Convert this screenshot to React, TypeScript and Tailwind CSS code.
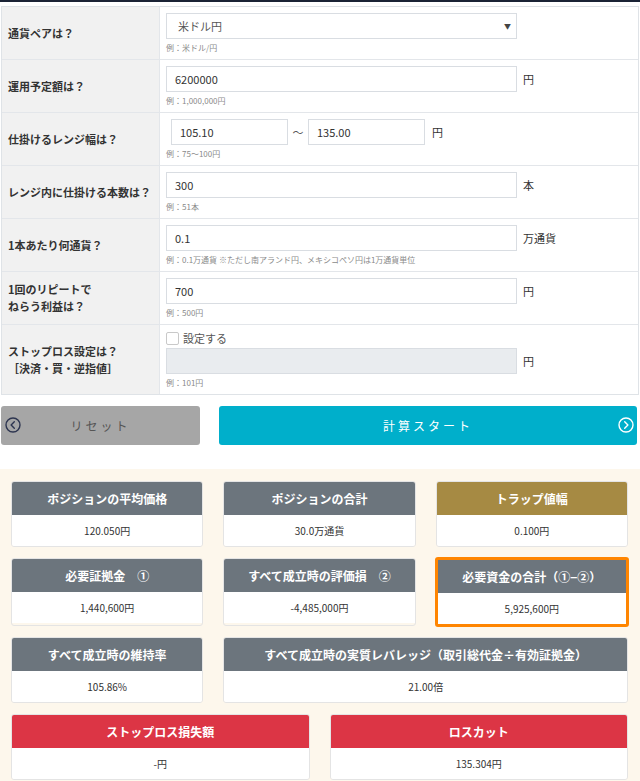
import React from 'react'

const font = { fontFamily: '"Noto Sans CJK JP", "Noto Sans", sans-serif' }

type Card = { title: string; value: string; tone: 'gray' | 'gold' | 'red'; span?: boolean; highlight?: boolean }

const cardRows: Card[] = [
  { title: 'ポジションの平均価格', value: '120.050円', tone: 'gray' },
  { title: 'ポジションの合計', value: '30.0万通貨', tone: 'gray' },
  { title: 'トラップ値幅', value: '0.100円', tone: 'gold' },
  { title: '必要証拠金　①', value: '1,440,600円', tone: 'gray' },
  { title: 'すべて成立時の評価損　②', value: '-4,485,000円', tone: 'gray' },
  { title: '必要資金の合計（①−②）', value: '5,925,600円', tone: 'gray', highlight: true },
  { title: 'すべて成立時の維持率', value: '105.86%', tone: 'gray' },
  { title: 'すべて成立時の実質レバレッジ（取引総代金÷有効証拠金）', value: '21.00倍', tone: 'gray', span: true },
]

const lossCards: Card[] = [
  { title: 'ストップロス損失額', value: '-円', tone: 'red' },
  { title: 'ロスカット', value: '135.304円', tone: 'red' },
]

function Row({ label, children }: { label: React.ReactNode; children: React.ReactNode }) {
  return (
    <div className="flex border-b border-[#e3e6ea] last:border-b-0">
      <div className="flex w-[158px] shrink-0 items-center border-r border-[#e3e6ea] bg-[#f1f1f1] px-[6px] text-[11px] font-bold leading-[17px] text-[#333]">
        {label}
      </div>
      <div className="flex-1 px-[6px] pb-[6px] pt-[6px]">{children}</div>
    </div>
  )
}

function Example({ children }: { children: React.ReactNode }) {
  return <div className="mt-[3px] text-[8px] leading-[11px] text-[#8a8a8a]">{children}</div>
}

function TextInput({ value, width = 'w-[351px]', disabled }: { value?: string; width?: string; disabled?: boolean }) {
  return (
    <div
      className={`flex h-[26px] ${width} items-center border border-[#d9dde2] px-[8px] text-[11px] text-[#333] ${
        disabled ? 'bg-[#e9ecef]' : 'bg-white'
      }`}
    >
      {value}
    </div>
  )
}

function ResultCard({ card }: { card: Card }) {
  const head = card.tone === 'gold' ? 'bg-[#a68a43]' : card.tone === 'red' ? 'bg-[#dc3545]' : 'bg-[#6c757d]'
  return (
    <div
      className={`overflow-hidden rounded-[3px] ${card.span ? 'col-span-2' : ''} ${
        card.highlight ? '-m-px border-[3px] border-[#ff8500]' : 'border border-[#e4e4e4]'
      }`}
    >
      <div className={`flex h-[33px] items-center justify-center text-[12px] font-bold text-white ${head}`}>
        {card.title}
      </div>
      <div className="flex h-[31px] items-center justify-center bg-white text-[10px] text-[#333]">{card.value}</div>
    </div>
  )
}

export default function App() {
  return (
    <div className="min-h-[781px] bg-white" style={font}>
      <div className="h-[2px] bg-[#1b2335]" />
      <div className="px-px pt-[4px]">
        <div className="w-[638px] border border-[#dfe3e7]">
          <Row label="通貨ペアは？">
            <div className="flex h-[26px] w-[351px] items-center justify-between border border-[#d9dde2] bg-white pl-[11px] pr-[5px] text-[11px] text-[#555]">
              <span>米ドル円</span>
              <span className="text-[7px] text-[#444]">▼</span>
            </div>
            <Example>例：米ドル/円</Example>
          </Row>
          <Row label="運用予定額は？">
            <div className="flex items-center gap-[6px]">
              <TextInput value="6200000" />
              <span className="text-[11px] text-[#333]">円</span>
            </div>
            <Example>例：1,000,000円</Example>
          </Row>
          <Row label="仕掛けるレンジ幅は？">
            <div className="flex items-center pl-[5px]">
              <TextInput value="105.10" width="w-[117px]" />
              <span className="w-[20px] text-center text-[11px] text-[#555]">～</span>
              <TextInput value="135.00" width="w-[117px]" />
              <span className="ml-[7px] text-[11px] text-[#333]">円</span>
            </div>
            <Example>例：75〜100円</Example>
          </Row>
          <Row label="レンジ内に仕掛ける本数は？">
            <div className="flex items-center gap-[6px]">
              <TextInput value="300" />
              <span className="text-[11px] text-[#333]">本</span>
            </div>
            <Example>例：51本</Example>
          </Row>
          <Row label="1本あたり何通貨？">
            <div className="flex items-center gap-[6px]">
              <TextInput value="0.1" />
              <span className="text-[11px] text-[#333]">万通貨</span>
            </div>
            <Example>例：0.1万通貨 ※ただし南アランド円、メキシコペソ円は1万通貨単位</Example>
          </Row>
          <Row
            label={
              <span>
                1回のリピートで
                <br />
                ねらう利益は？
              </span>
            }
          >
            <div className="flex items-center gap-[6px]">
              <TextInput value="700" />
              <span className="text-[11px] text-[#333]">円</span>
            </div>
            <Example>例：500円</Example>
          </Row>
          <Row
            label={
              <span>
                ストップロス設定は？
                <br />
                ［決済・買・逆指値］
              </span>
            }
          >
            <label className="flex h-[14px] items-center gap-[4px] text-[11px] text-[#555]">
              <span className="h-[13px] w-[13px] rounded-[2px] border border-[#c9c9c9] bg-white" />
              設定する
            </label>
            <div className="mt-[3px] flex items-center gap-[6px]">
              <TextInput disabled />
              <span className="text-[11px] text-[#333]">円</span>
            </div>
            <Example>例：101円</Example>
          </Row>
        </div>
      </div>

      <div className="mt-[11px] flex gap-[19px] px-px">
        <button className="relative flex h-[39px] w-[199px] items-center justify-center rounded-[3px] bg-[#a6a6a6] text-[12px] tracking-[3px] text-[#555]">
          <svg className="absolute left-[4px] top-[11px]" width="16" height="16" viewBox="0 0 16 16" fill="none">
            <circle cx="8" cy="8" r="7" stroke="#2d3550" strokeWidth="1.4" />
            <path d="M9.3 4.8 6.1 8l3.2 3.2" stroke="#2d3550" strokeWidth="1.4" strokeLinecap="round" strokeLinejoin="round" />
          </svg>
          リセット
        </button>
        <button className="relative flex h-[39px] w-[418px] items-center justify-center rounded-[3px] bg-[#00afcb] text-[12px] tracking-[3px] text-white">
          計算スタート
          <svg className="absolute right-[3px] top-[11px]" width="16" height="16" viewBox="0 0 16 16" fill="none">
            <circle cx="8" cy="8" r="7" stroke="#fff" strokeWidth="1.4" />
            <path d="M6.7 4.8 9.9 8l-3.2 3.2" stroke="#fff" strokeWidth="1.4" strokeLinecap="round" strokeLinejoin="round" />
          </svg>
        </button>
      </div>

      <div className="mt-[24px] bg-[#fdf7ec] pb-[10px] pl-[11px] pr-[12px] pt-[12px]">
        <div className="grid grid-cols-3 gap-x-[20px] gap-y-[11px]">
          {cardRows.map((card) => (
            <ResultCard key={card.title} card={card} />
          ))}
        </div>
        <div className="mt-[11px] grid grid-cols-2 gap-x-[20px]">
          {lossCards.map((card) => (
            <ResultCard key={card.title} card={card} />
          ))}
        </div>
      </div>
    </div>
  )
}
